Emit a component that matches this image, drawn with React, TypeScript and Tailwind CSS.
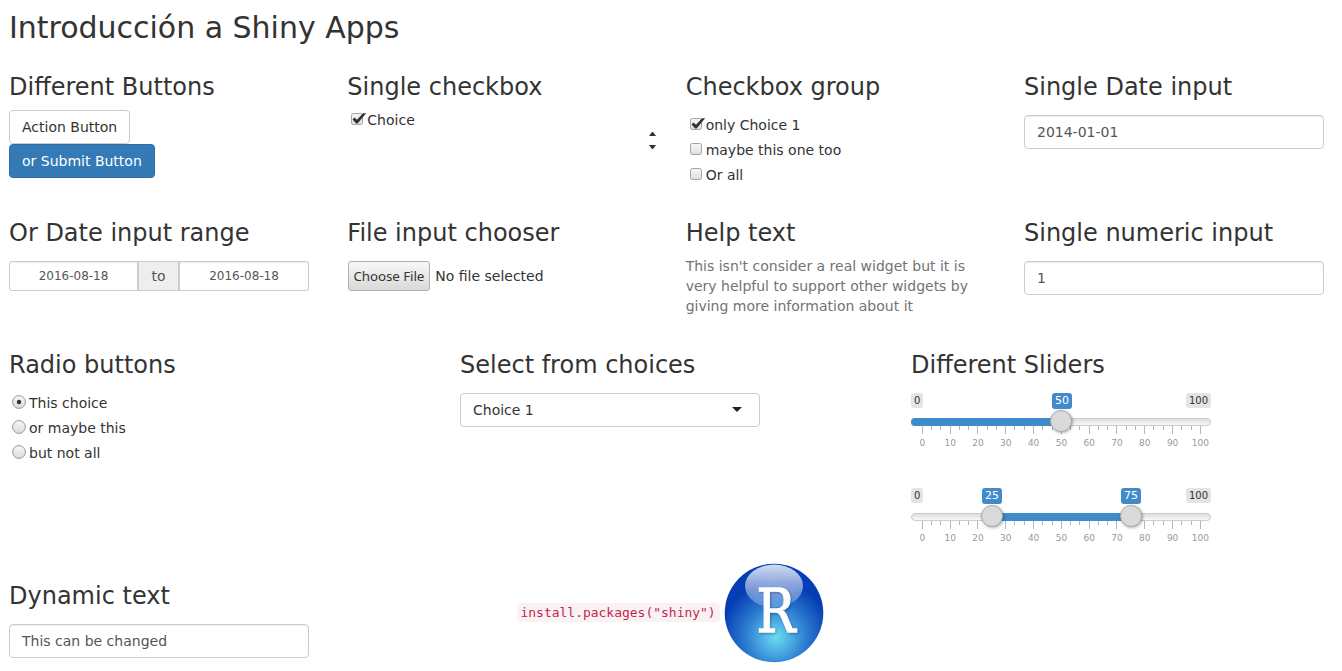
import type { ReactNode } from "react";

const heading = "text-[24px] leading-[26.4px] whitespace-nowrap";
const field =
  "w-[300px] h-[34px] border border-[#ccc] rounded-[4px] bg-white px-3 flex items-center text-[14px] text-[#555] shadow-[inset_0_1px_1px_rgba(0,0,0,0.075)]";

function CheckBox({ checked = false }: { checked?: boolean }) {
  return (
    <svg width="17" height="14" viewBox="0 0 17 14" className="shrink-0">
      <defs>
        <linearGradient id="boxFill" x1="0" y1="0" x2="0" y2="1">
          <stop offset="0" stopColor="#f8f8f8" />
          <stop offset="1" stopColor="#dedede" />
        </linearGradient>
      </defs>
      <rect x="0.5" y="1.5" width="11" height="11" rx="1.8" fill="url(#boxFill)" stroke="#a5a5a5" />
      {checked && (
        <path d="M1.6 7.4 3.4 5.6 6 7.8 12 1.2H15.2L6.6 11.4H5.2Z" fill="#2e3436" />
      )}
    </svg>
  );
}

function Choice({ children, checked }: { children: ReactNode; checked?: boolean }) {
  return (
    <div className="flex h-5 items-center pl-1">
      <div className="-mt-[2px] w-4">
        <CheckBox checked={checked} />
      </div>
      <span>{children}</span>
    </div>
  );
}

function Radio({ children, checked }: { children: ReactNode; checked?: boolean }) {
  return (
    <div className="flex h-5 items-center pl-[3px]">
      <div className="-mt-[2px] w-[17px]">
        <svg width="14" height="14" viewBox="0 0 14 14">
          <defs>
            <linearGradient id="radioFill" x1="0" y1="0" x2="0" y2="1">
              <stop offset="0" stopColor="#f8f8f8" />
              <stop offset="1" stopColor="#dadada" />
            </linearGradient>
          </defs>
          <circle cx="7" cy="7" r="6.4" fill="url(#radioFill)" stroke="#989898" />
          {checked && <circle cx="7" cy="7" r="2.2" fill="#2e3436" />}
        </svg>
      </div>
      <span>{children}</span>
    </div>
  );
}

function Slider({ from, to, values }: { from: number; to: number; values: number[] }) {
  const ticks = Array.from({ length: 31 }, (_, i) => i);
  const pos = (v: number) => 11.5 + v * 2.78;
  return (
    <div className="relative h-[55px] w-[300px]">
      <div className="flex justify-between text-[10px] leading-[13px] text-[#333]">
        <span className="h-[15px] rounded-[3px] bg-[#e4e4e4] px-[3px] py-px">0</span>
        <span className="h-[15px] rounded-[3px] bg-[#e4e4e4] px-[3px] py-px">100</span>
      </div>
      <div className="mt-[10px] h-2 rounded-[8px] border border-[#ccc] bg-linear-to-b from-[#dedede] to-[#f8f8f8]" />
      <div
        className={
          from === 0
            ? "absolute top-[25px] h-2 rounded-l-[8px] bg-[#428bca]"
            : "absolute top-[25px] h-2 bg-[#428bca]"
        }
        style={{ left: from === 0 ? 0 : pos(from), width: pos(to) - (from === 0 ? 0 : pos(from)) }}
      />
      <svg width="300" height="22" viewBox="0 0 300 22" className="block overflow-visible">
        {ticks.map((i) => {
          const x = Math.floor(11.3 + i * 9.267);
          return (
            <rect key={i} x={x} y="0" width="1" height={i % 3 ? 4 : 8} fill={i % 3 ? "#b5b5b5" : "#99bfdf"} />
          );
        })}
        {ticks
          .filter((i) => i % 3 === 0)
          .map((i) => (
            <text key={i} x={11.4 + i * 9.267} y="20" textAnchor="middle" fontSize="9" fill="#999">
              {(i / 3) * 10}
            </text>
          ))}
      </svg>
      {values.map((v) => {
        const left = Math.floor(pos(v) + 0.1);
        const labelShift = Math.round(pos(v) + 0.01) - left;
        return (
          <div
            key={v}
            className="absolute top-0 flex w-[22px] flex-col items-center"
            style={{ left: left - 11 }}
          >
            <span
              className="h-4 rounded-[3px] bg-[#428bca] px-[3px] py-px text-[11px] leading-[14px] text-white"
              style={{ marginLeft: labelShift * 2 }}
            >
              {v}
            </span>
            <span className="mt-px h-[22px] w-[22px] rounded-full border border-[#aaa] bg-[#dadada] shadow-[1px_1px_3px_rgba(0,0,0,0.3)]" />
          </div>
        );
      })}
    </div>
  );
}

function Logo() {
  return (
    <svg width="100" height="100" viewBox="0 0 100 100">
      <defs>
        <radialGradient id="orb" cx="0.52" cy="0.74" r="0.62">
          <stop offset="0" stopColor="#6bdcf0" />
          <stop offset="0.22" stopColor="#50b2e5" />
          <stop offset="0.5" stopColor="#2c7ccf" />
          <stop offset="0.9" stopColor="#053db4" />
        </radialGradient>
        <linearGradient id="gloss" x1="0" y1="0" x2="0" y2="1">
          <stop offset="0" stopColor="#fff" stopOpacity="0.82" />
          <stop offset="1" stopColor="#fff" stopOpacity="0.2" />
        </linearGradient>
      </defs>
      <circle cx="50" cy="50" r="49.3" fill="url(#orb)" />
      <ellipse cx="50" cy="23" rx="29" ry="21.5" fill="url(#gloss)" />
      <text
        transform="translate(52 69.3) scale(0.87 1)"
        textAnchor="middle"
        fontSize="59.5"
        fill="#fff"
        stroke="#fff"
        strokeWidth="1.3"
        className="font-['DejaVu_Serif',serif] drop-shadow-[1px_1px_1px_rgba(0,30,90,0.4)]"
      >
        R
      </text>
    </svg>
  );
}

export default function App() {
  return (
    <div className="h-[671px] w-[1342px] overflow-hidden bg-white pt-[11px] pl-[9px] font-['DejaVu_Sans',sans-serif] text-[14px] leading-5 text-[#333]">
      <h2 className="h-[62.5px] text-[30px] leading-[33px] tracking-[-0.02px]">Introducción a Shiny Apps</h2>

      <div className="grid h-[146px] grid-cols-[338.33px_338.33px_338.33px_300px]">
        <section>
          <h3 className={heading}>Different Buttons</h3>
          <div className="mt-[10px] flex flex-col items-start">
            <button className="h-[34px] rounded-[4px] border border-[#ccc] bg-white px-3">Action Button</button>
            <button className="h-[34px] rounded-[4px] border border-[#2e6da4] bg-[#337ab7] px-3 text-white">
              or Submit Button
            </button>
          </div>
        </section>
        <section>
          <h3 className={heading}>Single checkbox</h3>
          <div className="mt-[10px]">
            <Choice checked>Choice</Choice>
          </div>
          <div className="mt-px flex w-[309px] justify-end">
            <svg width="7" height="18" viewBox="0 0 7 18" fill="#2e3436">
              <path d="M0 5 3 1H4L7 5ZM0 14H7L4 18H3Z" />
            </svg>
          </div>
        </section>
        <section>
          <h3 className={heading}>Checkbox group</h3>
          <div className="mt-[15px] flex flex-col gap-[5px]">
            <Choice checked>only Choice 1</Choice>
            <Choice>maybe this one too</Choice>
            <Choice>Or all</Choice>
          </div>
        </section>
        <section>
          <h3 className={heading}>Single Date input</h3>
          <div className="mt-[15px]">
            <div className={field}>2014-01-01</div>
          </div>
        </section>
      </div>

      <div className="grid h-[132px] grid-cols-[338.33px_338.33px_338.33px_300px]">
        <section>
          <h3 className={heading}>Or Date input range</h3>
          <div className="mt-[15px] flex h-[30px] w-[300px] text-[#555]">
            <div className="flex w-[129px] items-center justify-center rounded-l-[3px] border border-[#ccc] text-[12px] shadow-[inset_0_1px_1px_rgba(0,0,0,0.075)]">
              2016-08-18
            </div>
            <div className="flex w-[40px] items-center justify-center border-y border-l border-[#ccc] bg-[#eee]">to</div>
            <div className="flex w-[131px] items-center justify-center rounded-r-[3px] border border-l-2 border-[#ccc] text-[12px] shadow-[inset_0_1px_1px_rgba(0,0,0,0.075)]">
              2016-08-18
            </div>
          </div>
        </section>
        <section>
          <h3 className={heading}>File input chooser</h3>
          <div className="mt-[15px] flex items-center gap-[5.4px] pl-[0.5px]">
            <button className="h-[30px] w-[82px] rounded-[3px] border border-[#b0b0b0] bg-linear-to-b from-[#f8f8f8] to-[#d9d9d9] text-center font-['Noto_Sans',sans-serif] text-[13.33px] tracking-[-0.06px] whitespace-nowrap">
              Choose File
            </button>
            <span>No file selected</span>
          </div>
        </section>
        <section>
          <h3 className={heading}>Help text</h3>
          <p className="mt-[10px] w-[300px] text-[#737373]">
            This isn't consider a real widget but it is
            <br />
            very helpful to support other widgets by
            <br />
            giving more information about it
          </p>
        </section>
        <section>
          <h3 className={heading}>Single numeric input</h3>
          <div className="mt-[15px]">
            <div className={field}>1</div>
          </div>
        </section>
      </div>

      <div className="grid h-[231px] grid-cols-[451px_451px_300px]">
        <section>
          <h3 className={heading}>Radio buttons</h3>
          <div className="mt-[15px] flex flex-col gap-[5px]">
            <Radio checked>This choice</Radio>
            <Radio>or maybe this</Radio>
            <Radio>but not all</Radio>
          </div>
        </section>
        <section>
          <h3 className={heading}>Select from choices</h3>
          <div className="mt-[15px] flex h-[34px] w-[300px] items-center justify-between rounded-[4px] border border-[#ccc] bg-white pr-[17px] pl-3">
            <span>Choice 1</span>
            <svg width="10" height="5" viewBox="0 0 10 5" fill="#222">
              <path d="M0 0H10L5 5Z" />
            </svg>
          </div>
        </section>
        <section>
          <h3 className={heading}>Different Sliders</h3>
          <div className="mt-[15px] flex flex-col gap-10">
            <Slider from={0} to={50} values={[50]} />
            <Slider from={25} to={75} values={[25, 75]} />
          </div>
        </section>
      </div>

      <div className="flex">
        <section className="w-[507.5px]">
          <h3 className={heading}>Dynamic text</h3>
          <div className="mt-[15px]">
            <div className={field}>This can be changed</div>
          </div>
        </section>
        <div className="-mt-5 flex h-[100px] items-center gap-[4.6px]">
          <code className="rounded-[4px] bg-[#f9f2f4] px-1 py-[2px] font-['DejaVu_Sans_Mono',monospace] text-[13px] leading-[15px] tracking-[-0.02px] text-[#c7254e]">
            install.packages("shiny")
          </code>
          <Logo />
        </div>
      </div>
    </div>
  );
}
